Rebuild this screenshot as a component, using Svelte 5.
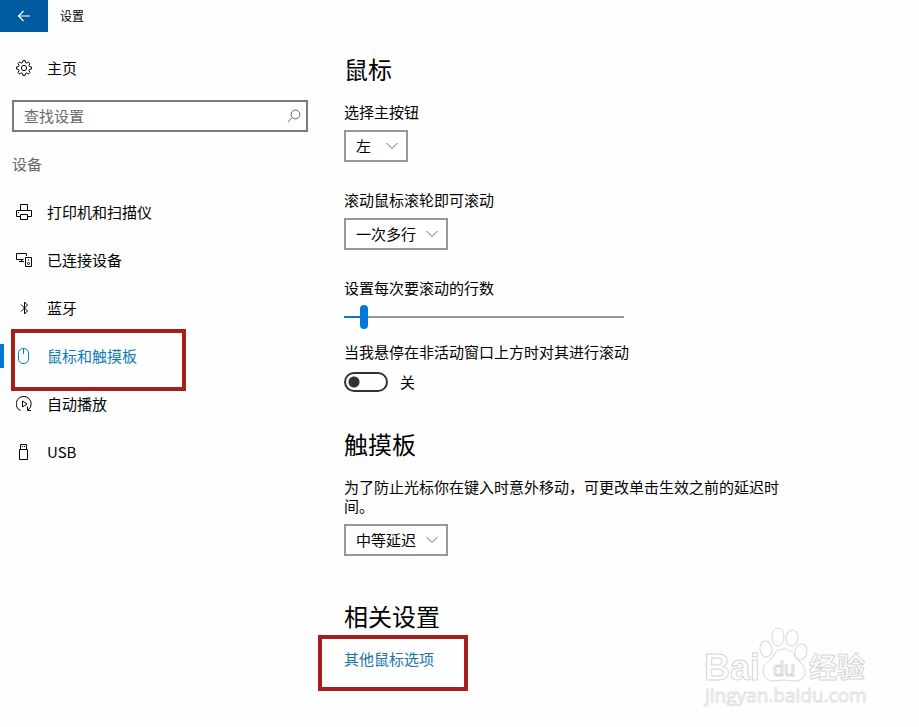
<script lang="ts">
	const items = [
		{ id: 'printers', label: '打印机和扫描仪' },
		{ id: 'connected', label: '已连接设备' },
		{ id: 'bluetooth', label: '蓝牙' },
		{ id: 'mouse', label: '鼠标和触摸板' },
		{ id: 'autoplay', label: '自动播放' },
		{ id: 'usb', label: 'USB' }
	];

	const minLines = 1;
	const maxLines = 35;

	let current = $state('mouse');
	let query = $state('');
	let primary = $state('left');
	let wheel = $state('lines');
	let lines = $state(3);
	let hoverScroll = $state(false);
	let delay = $state('medium');

	let fill = $derived(((lines - minLines) / (maxLines - minLines)) * 100);
</script>

{#snippet chevron()}
	<svg class="chevron" width="12" height="8" viewBox="0 0 12 8" aria-hidden="true">
		<path d="M0.5 1 L6 6.5 L11.5 1" fill="none" stroke="#666" />
	</svg>
{/snippet}

<div class="window">
	<header class="titlebar">
		<button class="back" aria-label="返回">
			<svg width="14" height="12" viewBox="0 0 14 12" fill="none" stroke="#fff" stroke-width="1.2">
				<path d="M13 6 H1.5 M6.5 1 L1.5 6 L6.5 11" />
			</svg>
		</button>
		<span class="title">设置</span>
	</header>

	<div class="body">
		<aside class="sidebar">
			<a class="row" href="#home">
				<svg class="icon" viewBox="0 0 16 16">
					<path
						d="M6.9 0.6 H9.1 L9.5 2.6 L10.6 3.1 L12.4 2 L14 3.6 L12.9 5.4 L13.4 6.5 L15.4 6.9 V9.1 L13.4 9.5 L12.9 10.6 L14 12.4 L12.4 14 L10.6 12.9 L9.5 13.4 L9.1 15.4 H6.9 L6.5 13.4 L5.4 12.9 L3.6 14 L2 12.4 L3.1 10.6 L2.6 9.5 L0.6 9.1 V6.9 L2.6 6.5 L3.1 5.4 L2 3.6 L3.6 2 L5.4 3.1 L6.5 2.6 Z"
					/>
					<circle cx="8" cy="8" r="2.6" />
				</svg>
				主页
			</a>

			<div class="search">
				<input type="text" placeholder="查找设置" aria-label="查找设置" bind:value={query} />
				<svg width="14" height="14" viewBox="0 0 14 14" fill="none" stroke="#666" aria-hidden="true">
					<circle cx="8.5" cy="5.5" r="4.4" />
					<path d="M5.2 8.6 L0.8 13" />
				</svg>
			</div>

			<div class="group">设备</div>

			<nav>
				{#each items as item}
					<a
						class="row"
						class:active={current === item.id}
						href="#{item.id}"
						onclick={() => (current = item.id)}
					>
						<svg class="icon" viewBox="0 0 16 16">
							{#if item.id === 'printers'}
								<path d="M4.5 6.5 V0.5 H11.5 V6.5" />
								<path d="M4.5 12.5 H0.5 V6.5 H15.5 V12.5 H11.5" />
								<path d="M4.5 10.5 H11.5 V15.5 H4.5 Z M2 8.5 H3" />
							{:else if item.id === 'connected'}
								<path d="M7.5 7.5 H0.5 V1.5 H10.5 V4 M5.5 7.5 V9.5 M3 9.5 H8" />
								<path d="M9.5 5.5 H15.5 V14.5 H9.5 Z" />
								<circle cx="12.5" cy="11.5" r="1" />
								<path d="M12 8 H13" />
							{:else if item.id === 'bluetooth'}
								<path d="M5 4.5 L11.5 11 L8.5 14 V2 L11.5 5 L5 11.5" />
							{:else if item.id === 'mouse'}
								<rect x="2.5" y="0.5" width="10" height="15" rx="4.5" />
								<path d="M7.5 0.5 V6" />
							{:else if item.id === 'autoplay'}
								<path d="M4.5 14.7 A7.5 7.5 0 1 1 12 14" />
								<path d="M11.5 10.5 V14.5 H15 M6.5 5 L11 8 L6.5 11 Z" />
							{:else}
								<path d="M3.5 5.5 H11.5 V15.5 H3.5 Z M4.5 5.5 V0.5 H10.5 V5.5" />
								<path d="M6 2.5 H7 M8 2.5 H9" />
							{/if}
						</svg>
						{item.label}
					</a>
				{/each}
			</nav>
		</aside>

		<main>
			<section>
				<h1>鼠标</h1>

				<div class="field">
					<label for="primary">选择主按钮</label>
					<div class="select narrow">
						<select id="primary" bind:value={primary}>
							<option value="left">左</option>
							<option value="right">右</option>
						</select>
						{@render chevron()}
					</div>
				</div>

				<div class="field">
					<label for="wheel">滚动鼠标滚轮即可滚动</label>
					<div class="select">
						<select id="wheel" bind:value={wheel}>
							<option value="lines">一次多行</option>
							<option value="screen">一次一屏</option>
						</select>
						{@render chevron()}
					</div>
				</div>

				<div class="field tight">
					<label for="lines">设置每次要滚动的行数</label>
					<input
						id="lines"
						class="slider"
						type="range"
						min={minLines}
						max={maxLines}
						bind:value={lines}
						style="--fill: {fill}%"
					/>
				</div>

				<div class="field">
					<label for="hover">当我悬停在非活动窗口上方时对其进行滚动</label>
					<div class="switch">
						<input id="hover" type="checkbox" role="switch" bind:checked={hoverScroll} />
						<span>{hoverScroll ? '开' : '关'}</span>
					</div>
				</div>
			</section>

			<section>
				<h2>触摸板</h2>
				<div class="field">
					<label for="delay">为了防止光标你在键入时意外移动，可更改单击生效之前的延迟时间。</label>
					<div class="select">
						<select id="delay" bind:value={delay}>
							<option value="none">无延迟</option>
							<option value="short">短延迟</option>
							<option value="medium">中等延迟</option>
							<option value="long">长延迟</option>
						</select>
						{@render chevron()}
					</div>
				</div>
			</section>

			<section>
				<h2>相关设置</h2>
				<a class="link" href="#more">其他鼠标选项</a>
			</section>
		</main>
	</div>

	<svg class="watermark" width="172" height="88" viewBox="0 0 172 88" aria-hidden="true">
		<g fill="#fff" stroke="#d6d6d6">
			<ellipse cx="66" cy="25" rx="6" ry="8" transform="rotate(-8 66 25)" />
			<ellipse cx="78" cy="13" rx="6" ry="9" />
			<ellipse cx="92" cy="14" rx="6" ry="8" transform="rotate(10 92 14)" />
			<ellipse cx="101" cy="28" rx="6" ry="8" transform="rotate(15 101 28)" />
			<path
				d="M84 25 C91 25 94 31 97 35 C101 39 105 42 105 48 C105 54 100 57 94 57 C90 57 87 56 84 56 C80 56 78 57 74 57 C68 57 63 54 63 47 C63 41 68 38 71 35 C75 30 77 25 84 25 Z"
			/>
			<text class="brand" x="4" y="56">Bai</text>
			<text class="du" x="73" y="52">du</text>
			<text class="cn" x="109" y="54">经验</text>
			<text class="url" x="5" y="78">jingyan.baidu.com</text>
		</g>
	</svg>
</div>

<style>
	:global(body) {
		margin: 0;
		background: #fefefe;
	}

	.window {
		position: relative;
		min-height: 100vh;
		font-family: 'Noto Sans CJK SC', 'Noto Sans', sans-serif;
		font-size: 15px;
		line-height: 20px;
		color: #000;
	}

	.titlebar {
		display: flex;
		align-items: center;
		height: 32px;
	}

	.back {
		display: flex;
		align-items: center;
		justify-content: center;
		width: 48px;
		height: 32px;
		padding: 0;
		border: 0;
		background: #005a9e;
		cursor: pointer;
	}

	.title {
		margin-left: 12px;
		font-size: 12px;
	}

	.body {
		display: flex;
	}

	.sidebar {
		flex: 0 0 320px;
		padding-top: 12px;
	}

	.row {
		position: relative;
		display: flex;
		align-items: center;
		gap: 15px;
		height: 48px;
		padding-left: 16px;
		color: inherit;
		text-decoration: none;
	}

	.icon {
		width: 16px;
		height: 16px;
		fill: none;
		stroke: currentColor;
	}

	.row.active {
		color: #0f7ab8;
	}

	.row.active::before {
		content: '';
		position: absolute;
		left: 0;
		top: 12px;
		width: 4px;
		height: 24px;
		background: #0078d7;
	}

	/* red callout frames */
	.row.active::after,
	.link::after {
		content: '';
		position: absolute;
		box-sizing: border-box;
		border: 4px solid #a5201a;
		pointer-events: none;
	}

	.row.active::after {
		left: 11px;
		top: -3px;
		width: 175px;
		height: 62px;
	}

	.search {
		display: flex;
		align-items: center;
		box-sizing: border-box;
		height: 32px;
		margin: 8px 12px 20px;
		padding: 0 5px 0 10px;
		border: 2px solid #7a7a7a;
		background: #fff;
	}

	.search input {
		flex: 1;
		min-width: 0;
		padding: 0;
		border: 0;
		outline: 0;
		background: none;
		font: inherit;
	}

	.search input::placeholder {
		color: #6a6a6a;
	}

	.group {
		margin: 0 12px 12px;
		line-height: 24px;
		color: #6a6a6a;
	}

	main {
		flex: 1;
		min-width: 0;
		padding: 22px 24px;
	}

	section {
		margin-bottom: 45px;
	}

	section:first-child {
		margin-bottom: 37px;
	}

	section:last-child {
		margin-bottom: 0;
	}

	h1,
	h2 {
		margin: 0 0 18px;
		font-size: 24px;
		font-weight: 400;
		line-height: 30px;
	}

	.field {
		display: flex;
		flex-direction: column;
		align-items: flex-start;
		gap: 9px;
		max-width: 440px;
		margin-bottom: 28px;
	}

	.field.tight {
		gap: 8px;
		margin-bottom: 13px;
	}

	.field:last-child {
		margin-bottom: 0;
	}

	label {
		line-height: 19px;
	}

	.select {
		position: relative;
		width: 104px;
	}

	.select.narrow {
		width: 64px;
	}

	select {
		appearance: none;
		display: block;
		width: 100%;
		height: 32px;
		padding: 0 0 0 10px;
		border: 2px solid #999;
		border-radius: 0;
		background: #fff;
		color: #000;
		font: inherit;
	}

	.chevron {
		position: absolute;
		right: 10px;
		top: 12px;
		pointer-events: none;
	}

	.slider {
		appearance: none;
		width: 280px;
		max-width: 100%;
		height: 24px;
		margin: 0;
		background: linear-gradient(#0078d7, #0078d7) 0 50% / var(--fill) 2px no-repeat,
			linear-gradient(#999, #999) 0 50% / 100% 2px no-repeat;
	}

	.slider::-webkit-slider-thumb {
		appearance: none;
		width: 8px;
		height: 24px;
		border-radius: 4px;
		background: #0078d7;
	}

	.switch {
		display: flex;
		align-items: center;
		gap: 12px;
		padding-top: 2px;
	}

	.switch input {
		appearance: none;
		box-sizing: border-box;
		width: 44px;
		height: 20px;
		margin: 0;
		border: 2px solid #333;
		border-radius: 10px;
		background: radial-gradient(circle at 8px 8px, #333 5px, transparent 6px);
	}

	.switch input:checked {
		border-color: #0078d7;
		background: radial-gradient(circle at 32px 8px, #fff 5px, #0078d7 6px);
	}

	.link {
		position: relative;
		display: inline-block;
		color: #1a75a8;
		text-decoration: none;
	}

	.link::after {
		left: -26px;
		top: -14px;
		width: 150px;
		height: 56px;
	}

	.watermark {
		position: absolute;
		right: 47px;
		bottom: 15px;
		pointer-events: none;
	}

	.brand {
		font: 700 36px 'Liberation Sans', sans-serif;
	}

	.du {
		font: 400 20px 'Liberation Sans', sans-serif;
	}

	.cn {
		font: 700 28px 'Noto Sans CJK SC', sans-serif;
	}

	.url {
		font: 400 19px 'Open Sans', sans-serif;
		stroke: #e2e2e2;
	}
</style>
